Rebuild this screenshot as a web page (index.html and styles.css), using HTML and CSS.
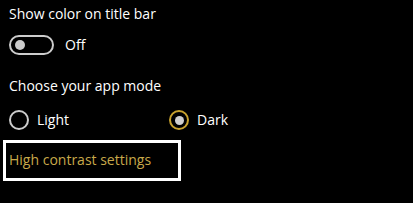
FILE: index.html
```html
<!DOCTYPE html>
<html lang="en">
<head>
<meta charset="UTF-8">
<title>Colors</title>
<link rel="stylesheet" href="styles.css">
</head>
<body>

<section class="setting">
  <h2 class="setting-title">Show color on title bar</h2>
  <div class="toggle-row">
    <span class="toggle"><span class="toggle-knob"></span></span>
    <span class="toggle-state">Off</span>
  </div>
</section>

<section class="setting">
  <h2 class="setting-title">Choose your app mode</h2>
  <div class="radio-row">
    <label class="radio"><span class="radio-circle"></span>Light</label>
    <label class="radio checked"><span class="radio-circle"></span>Dark</label>
  </div>
</section>

<a class="link-box" href="#">High contrast settings</a>

</body>
</html>
```

FILE: styles.css
```css
* { margin: 0; padding: 0; box-sizing: border-box; }
body { background: #000; color: #fff; font-family: 'Open Sans', 'Noto Sans', sans-serif; font-size: 14px; width: 413px; height: 203px; overflow: hidden; padding: 4px 0 0 9px; }
.setting-title { font-size: 14px; font-weight: normal; line-height: 20px; }
.toggle-row { display: flex; align-items: center; margin-top: 11px; height: 20px; }
.toggle { width: 45px; height: 20px; border: 2px solid #ccc; border-radius: 10px; display: flex; align-items: center; padding-left: 4px; }
.toggle-knob { width: 10px; height: 10px; border-radius: 50%; background: #ccc; }
.toggle-state { margin-left: 11px; line-height: 20px; }
.setting + .setting { margin-top: 21px; }
.radio-row { display: flex; margin-top: 14px; height: 20px; }
.radio { display: flex; align-items: center; width: 160px; line-height: 20px; }
.radio-circle { width: 20px; height: 20px; border: 2px solid #ccc; border-radius: 50%; margin-right: 8px; display: flex; align-items: center; justify-content: center; }
.radio.checked .radio-circle { border-color: #c8a22e; }
.radio.checked .radio-circle::after { content: ''; width: 9px; height: 9px; border-radius: 50%; background: #d0d0d0; }
.link-box { display: block; width: 178px; height: 41px; margin: 10px 0 0 -6px; border: 3px solid #fff; color: #c8a94a; text-decoration: none; padding: 7px 0 0 3px; line-height: 20px; }
```
